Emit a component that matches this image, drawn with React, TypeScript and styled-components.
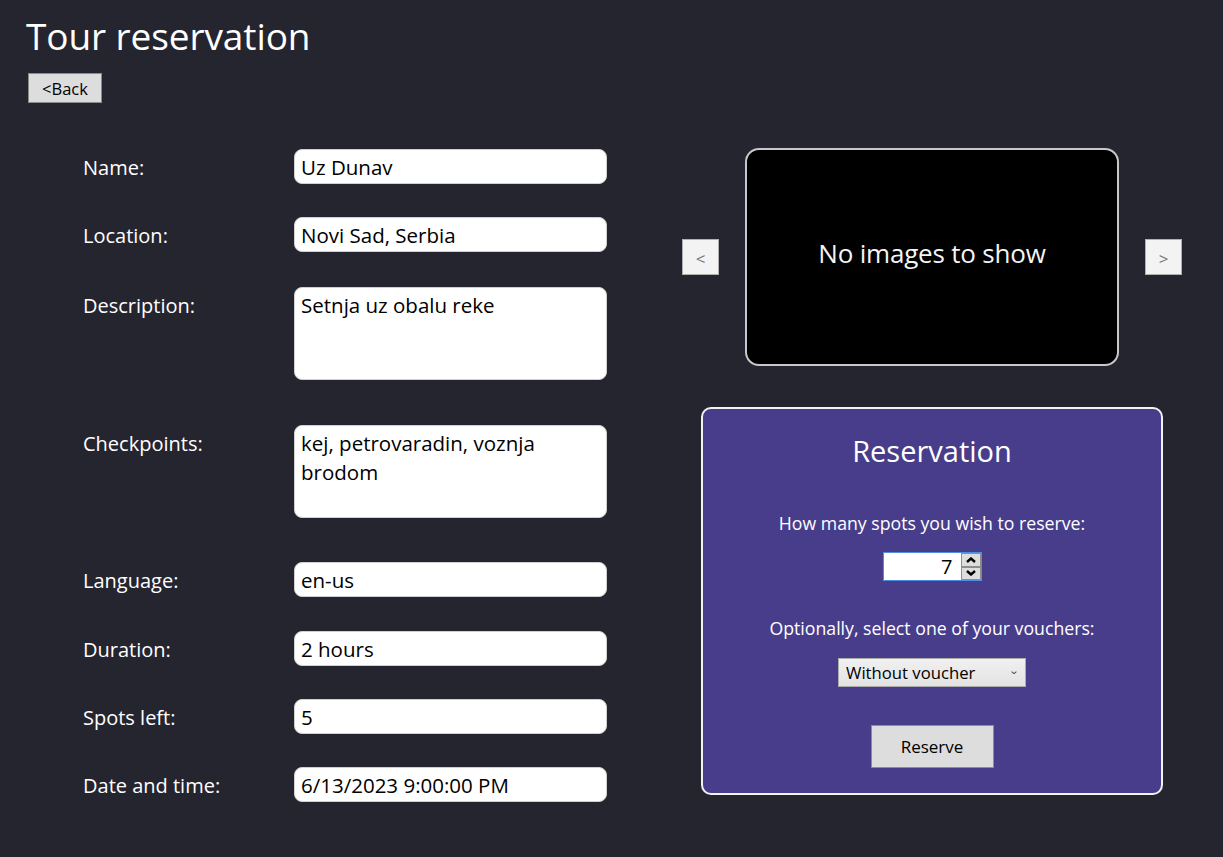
import React from 'react';
import styled, { createGlobalStyle } from 'styled-components';

const GlobalStyle = createGlobalStyle`
  html, body {
    margin: 0;
    padding: 0;
    background: #252530;
  }
  body {
    font-family: 'Open Sans', 'Noto Sans', sans-serif;
    color: #ffffff;
  }
`;

const Page = styled.div`
  width: 1223px;
  height: 857px;
  box-sizing: border-box;
  padding: 8px 0 0 26px;
  background: #252530;
  overflow: hidden;
`;

const Title = styled.h1`
  margin: 0;
  font-size: 37px;
  font-weight: 400;
  line-height: 56px;
  letter-spacing: -0.1px;
`;

const BackButton = styled.button`
  margin: 9px 0 0 2px;
  width: 74px;
  height: 30px;
  padding: 0;
  background: #dddddd;
  border: 1px solid #8a8a8a;
  color: #000;
  font-family: inherit;
  font-size: 16.5px;
`;

const Content = styled.div`
  display: flex;
  align-items: flex-start;
  margin-top: 46px;
  padding-left: 57px;
`;

const Form = styled.div`
  display: grid;
  grid-template-columns: 211px 313px;
  grid-template-rows: 68px 70px 138px 137px 69px 68px 68px auto;
`;

const Label = styled.div`
  padding-top: 5px;
  font-size: 20px;
  line-height: 27px;
  color: #ffffff;
`;

const TextBox = styled.input`
  box-sizing: border-box;
  width: 313px;
  height: 35px;
  padding: 3px 6px;
  border: 1px solid #d0d0d0;
  border-radius: 8px;
  background: #ffffff;
  color: #000;
  font-family: inherit;
  font-size: 20.5px;
  line-height: 27px;
  outline: none;
`;

const TextArea = styled.textarea`
  box-sizing: border-box;
  width: 313px;
  height: 93px;
  padding: 3px 6px;
  border: 1px solid #d0d0d0;
  border-radius: 8px;
  background: #ffffff;
  color: #000;
  font-family: inherit;
  font-size: 20.5px;
  line-height: 29px;
  resize: none;
  overflow: hidden;
  outline: none;
`;

const Side = styled.div`
  display: flex;
  flex-direction: column;
  align-items: center;
  width: 500px;
  margin-left: 75px;
  margin-top: -1px;
`;

const Gallery = styled.div`
  display: flex;
  align-items: center;
  gap: 26px;
`;

const NavButton = styled.button`
  width: 37px;
  height: 36px;
  padding: 3px 0 0;
  background: #f3f3f3;
  border: 1px solid #b0b0b0;
  color: #777;
  font-family: inherit;
  font-size: 17px;
  line-height: 1;
`;

const ImageBox = styled.div`
  display: flex;
  align-items: center;
  justify-content: center;
  box-sizing: border-box;
  width: 374px;
  height: 218px;
  padding-bottom: 8px;
  background: #000;
  border: 2px solid #c8c8c8;
  border-radius: 14px;
  font-size: 26px;
  color: #f4f4f4;
  letter-spacing: -0.2px;
`;

const Panel = styled.div`
  box-sizing: border-box;
  width: 462px;
  height: 388px;
  margin-top: 41px;
  display: flex;
  flex-direction: column;
  align-items: center;
  background: #483d8b;
  border: 2px solid #f2f2f2;
  border-radius: 10px;
  padding-top: 22px;
`;

const PanelTitle = styled.div`
  font-size: 29px;
  line-height: 40px;
`;

const Prompt = styled.div<{ $top: number }>`
  margin-top: ${(p) => p.$top}px;
  font-size: 17.7px;
  line-height: 24px;
`;

const Spinner = styled.div`
  display: flex;
  margin-top: 17px;
  height: 29px;
`;

const SpinValue = styled.div`
  box-sizing: border-box;
  width: 78px;
  height: 29px;
  padding: 0 8px;
  background: #fff;
  border: 1px solid #4f8fe0;
  border-right: none;
  color: #000;
  font-size: 20px;
  line-height: 27px;
  text-align: right;
`;

const SpinButtons = styled.div`
  display: flex;
  flex-direction: column;
  box-sizing: border-box;
  width: 21px;
  height: 29px;
  border: 1px solid #4f8fe0;
  border-left: none;
`;

const SpinButton = styled.div`
  flex: 1;
  display: flex;
  align-items: center;
  justify-content: center;
  background: #dedede;
  border: 1px solid #8e8e8e;
`;

const Combo = styled.div`
  display: flex;
  align-items: center;
  justify-content: space-between;
  box-sizing: border-box;
  width: 188px;
  height: 29px;
  margin-top: 18px;
  padding: 0 8px 0 7px;
  background: linear-gradient(#f0f0f0, #e3e3e3);
  border: 1px solid #acacac;
  color: #000;
  font-size: 16.7px;
`;

const ReserveButton = styled.button`
  width: 123px;
  height: 43px;
  margin-top: 38px;
  padding: 0;
  background: #dddddd;
  border: 1px solid #8d8d8d;
  color: #000;
  font-family: inherit;
  font-size: 17px;
`;

const Chevron: React.FC<{ up?: boolean; size?: number; color?: string; weight?: number }> = ({
  up,
  size = 10,
  color = '#000',
  weight = 1.8,
}) => (
  <svg width={size} height={size * 0.6} viewBox="0 0 10 6">
    <path
      d={up ? 'M1 5 L5 1.5 L9 5' : 'M1 1 L5 4.5 L9 1'}
      fill="none"
      stroke={color}
      strokeWidth={weight}
    />
  </svg>
);

const fields: { label: string; value: string; multi?: boolean }[] = [
  { label: 'Name:', value: 'Uz Dunav' },
  { label: 'Location:', value: 'Novi Sad, Serbia' },
  { label: 'Description:', value: 'Setnja uz obalu reke', multi: true },
  { label: 'Checkpoints:', value: 'kej, petrovaradin, voznja brodom', multi: true },
  { label: 'Language:', value: 'en-us' },
  { label: 'Duration:', value: '2 hours' },
  { label: 'Spots left:', value: '5' },
  { label: 'Date and time:', value: '6/13/2023 9:00:00 PM' },
];

const App: React.FC = () => (
  <>
    <GlobalStyle />
    <Page>
      <Title>Tour reservation</Title>
      <BackButton>&lt;Back</BackButton>
      <Content>
        <Form>
          {fields.map((f) => (
            <React.Fragment key={f.label}>
              <Label>{f.label}</Label>
              <div>
                {f.multi ? (
                  <TextArea readOnly defaultValue={f.value} />
                ) : (
                  <TextBox readOnly defaultValue={f.value} />
                )}
              </div>
            </React.Fragment>
          ))}
        </Form>
        <Side>
          <Gallery>
            <NavButton>&lt;</NavButton>
            <ImageBox>No images to show</ImageBox>
            <NavButton>&gt;</NavButton>
          </Gallery>
          <Panel>
            <PanelTitle>Reservation</PanelTitle>
            <Prompt $top={40}>How many spots you wish to reserve:</Prompt>
            <Spinner>
              <SpinValue>7</SpinValue>
              <SpinButtons>
                <SpinButton>
                  <Chevron up size={10} weight={2.4} />
                </SpinButton>
                <SpinButton>
                  <Chevron size={10} weight={2.4} />
                </SpinButton>
              </SpinButtons>
            </Spinner>
            <Prompt $top={35}>Optionally, select one of your vouchers:</Prompt>
            <Combo>
              <span>Without voucher</span>
              <Chevron size={6} color="#555" />
            </Combo>
            <ReserveButton>Reserve</ReserveButton>
          </Panel>
        </Side>
      </Content>
    </Page>
  </>
);

export default App;
